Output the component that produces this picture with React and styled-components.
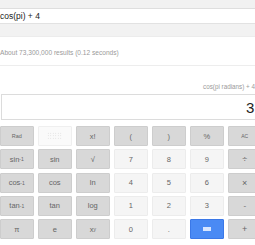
import React from "react";
import styled, { createGlobalStyle } from "styled-components";

const Global = createGlobalStyle`
  html, body { margin: 0; padding: 0; background: #fff; overflow: hidden; }
  body { width: 255px; height: 245px; font-family: "Liberation Sans", Arial, sans-serif; }
`;

const Page = styled.div`
  width: 255px;
  height: 245px;
  overflow: hidden;
  display: flex;
  flex-direction: column;
`;

const TopBar = styled.div`
  height: 8px;
  background: #f1f1f1;
  border-bottom: 1px solid #dedede;
`;

const SearchBox = styled.div`
  height: 14px;
  background: #fff;
  border-bottom: 1px solid #e2e2e2;
  display: flex;
  align-items: center;
  font-size: 8.5px;
  color: #222;
  padding-left: 0;
  white-space: nowrap;
`;

const Band = styled.div`
  height: 12px;
  background: #f2f2f2;
  border-bottom: 1px solid #ececec;
`;

const Results = styled.div`
  height: 29px;
  display: flex;
  align-items: center;
  padding-top: 3px;
  box-sizing: border-box;
  font-size: 6.6px;
  color: #9a9a9a;
  white-space: nowrap;
  border-bottom: 1px solid #ededed;
`;

const Calc = styled.div`
  display: flex;
  flex-direction: column;
  padding-top: 17px;
  padding-left: 1px;
  width: 270px;
`;

const Expression = styled.div`
  width: 254px;
  text-align: right;
  font-size: 6.3px;
  color: #9a9a9a;
  white-space: nowrap;
  height: 8px;
  line-height: 8px;
`;

const Display = styled.div`
  margin-top: 3px;
  height: 26px;
  width: 264px;
  border: 1px solid #dcdcdc;
  box-sizing: border-box;
  display: flex;
  align-items: center;
  font-size: 15px;
  color: #222;
  padding-left: 244px;
`;

const Keypad = styled.div`
  margin-top: 6px;
  margin-left: -1px;
  display: grid;
  grid-template-columns: repeat(7, 33.5px);
  grid-auto-rows: 20px;
  column-gap: 4.5px;
  row-gap: 3.3px;
`;

const Key = styled.div`
  box-sizing: border-box;
  display: flex;
  align-items: center;
  justify-content: center;
  font-size: ${(p) => p.$fs || 7.5}px;
  color: ${(p) => (p.$kind === "eq" ? "#fff" : "#666")};
  background: ${(p) =>
    p.$kind === "num" ? "#f5f5f5" : p.$kind === "eq" ? "#4a8af4" : p.$kind === "pat" ? "#fafafa" : "#d8d8d8"};
  border: 1px solid
    ${(p) =>
      p.$kind === "num" ? "#ececec" : p.$kind === "eq" ? "#3b78e7" : p.$kind === "pat" ? "#efefef" : "#cdcdcd"};
  border-radius: 1px;
  white-space: nowrap;
  sup { font-size: 5px; vertical-align: 3px; }
`;

const Dots = styled.div`
  width: 15px;
  height: 8px;
  background-image: radial-gradient(circle, #dadada 0.5px, transparent 0.8px);
  background-size: 2.5px 2.5px;
`;

const EqBar = styled.div`
  width: 8px;
  height: 4px;
  background: #d8e6ff;
`;

const keys = [
  [{ t: "Rad", fs: 5.5 }, { pat: true }, { t: "x!" }, { t: "(" }, { t: ")" }, { t: "%" }, { t: "AC", fs: 5 }],
  [{ t: "sin", sup: "-1" }, { t: "sin" }, { t: "√" }, { t: "7", k: "num" }, { t: "8", k: "num" }, { t: "9", k: "num" }, { t: "÷", fs: 9 }],
  [{ t: "cos", sup: "-1" }, { t: "cos" }, { t: "ln" }, { t: "4", k: "num" }, { t: "5", k: "num" }, { t: "6", k: "num" }, { t: "×", fs: 9 }],
  [{ t: "tan", sup: "-1" }, { t: "tan" }, { t: "log" }, { t: "1", k: "num" }, { t: "2", k: "num" }, { t: "3", k: "num" }, { t: "-", fs: 8 }],
  [{ t: "π" }, { t: "e" }, { t: "x", sup: "y" }, { t: "0", k: "num" }, { t: ".", k: "num" }, { eq: true }, { t: "+", fs: 9 }],
];

export default function App() {
  return (
    <Page>
      <Global />
      <TopBar />
      <SearchBox>cos(pi) + 4</SearchBox>
      <Band />
      <Results>About 73,300,000 results (0.12 seconds)</Results>
      <Calc>
        <Expression>cos(pi radians) + 4</Expression>
        <Display>3</Display>
        <Keypad>
          {keys.flat().map((k, i) => {
            if (k.pat)
              return (
                <Key key={i} $kind="pat">
                  <Dots />
                </Key>
              );
            if (k.eq)
              return (
                <Key key={i} $kind="eq">
                  <EqBar />
                </Key>
              );
            return (
              <Key key={i} $kind={k.k} $fs={k.fs}>
                {k.t}
                {k.sup && <sup>{k.sup}</sup>}
              </Key>
            );
          })}
        </Keypad>
      </Calc>
    </Page>
  );
}
